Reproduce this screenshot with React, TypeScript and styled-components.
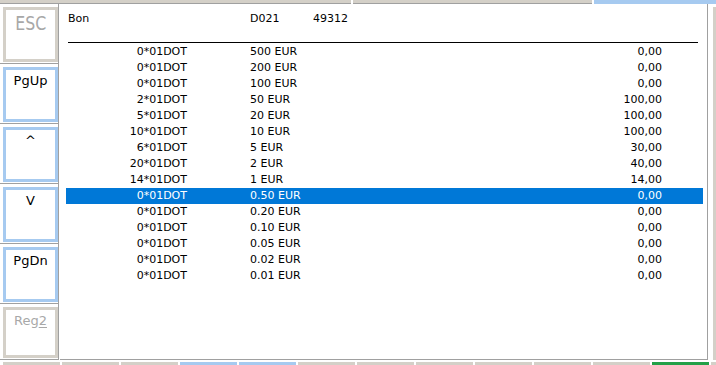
import React from 'react';
import styled, { createGlobalStyle } from 'styled-components';

const GlobalStyle = createGlobalStyle`
  html, body {
    margin: 0;
    padding: 0;
    background: #ffffff;
  }

  body {
    font-family: "DejaVu Sans", Verdana, sans-serif;
    color: #000000;
  }

  #root {
    width: 716px;
    height: 365px;
    overflow: hidden;
  }
`;

const colors = {
  face: '#d4d0c8',
  shadow: '#a0a0a0',
  pale: '#a6caf0',
  green: '#23a048',
  select: '#0078d7',
  disabled: '#a8a8a8',
};

type Tone = 'grey' | 'blue' | 'green';

const toneColor = (tone: Tone) =>
  tone === 'blue' ? colors.pale : tone === 'green' ? colors.green : colors.face;

const Screen = styled.div`
  display: flex;
  flex-direction: column;
  width: 716px;
  height: 365px;
  overflow: hidden;
  background: #ffffff;
`;

const TopStrip = styled.div`
  display: flex;
  gap: 2px;
  height: 4px;
  flex: none;
`;

const TopSeg = styled.div<{ $width?: number; $tone: Tone }>`
  box-sizing: border-box;
  flex: ${({ $width }) => ($width ? `0 0 ${$width}px` : '1')};
  height: 4px;
  background: ${({ $tone }) => toneColor($tone)};
  border-bottom: 1px solid ${({ $tone }) => ($tone === 'grey' ? colors.shadow : colors.pale)};
`;

const Middle = styled.div`
  display: flex;
  flex: 1;
  min-height: 0;
`;

const SideColumn = styled.div`
  display: flex;
  flex-direction: column;
  width: 59px;
  flex: none;
`;

const KeyCell = styled.div<{ $fill?: boolean }>`
  box-sizing: border-box;
  display: flex;
  height: ${({ $fill }) => ($fill ? 'auto' : '60px')};
  flex: ${({ $fill }) => ($fill ? '1' : 'none')};
  padding: 3px 0 1px 3px;
  border-right: 1px solid ${colors.shadow};
  border-bottom: 1px solid ${colors.shadow};
`;

const KeyBox = styled.div<{ $disabled?: boolean; $big?: boolean }>`
  box-sizing: border-box;
  width: 55px;
  flex: 1;
  border: 3px solid ${({ $disabled }) => ($disabled ? colors.face : colors.pale)};
  background: #ffffff;
  text-align: center;
  padding-top: ${({ $big }) => ($big ? '1px' : '3px')};
  font-size: ${({ $big }) => ($big ? '19px' : '13px')};
  line-height: ${({ $big }) => ($big ? '24px' : '16px')};
  color: ${({ $disabled }) => ($disabled ? colors.disabled : '#000000')};

  u {
    text-decoration: underline;
    text-underline-offset: 2px;
  }
`;

const NarrowLabel = styled.span`
  display: inline-block;
  transform: scaleX(0.83);
`;

const Panel = styled.div`
  box-sizing: border-box;
  flex: 1;
  margin-left: 1px;
  padding: 7px 4px 0 6px;
  border-right: 1px solid ${colors.shadow};
  border-bottom: 1px solid ${colors.shadow};
  font-size: 11px;
  line-height: 16px;
  overflow: hidden;
`;

const HeaderRow = styled.div`
  display: flex;
  height: 16px;
  white-space: nowrap;
`;

const HeaderCell = styled.div<{ $width?: number; $indent?: number }>`
  flex: ${({ $width }) => ($width ? `0 0 ${$width}px` : '1')};
  padding-left: ${({ $indent }) => $indent ?? 0}px;
  box-sizing: border-box;
`;

const Rule = styled.div`
  height: 1px;
  margin: 15px 5px 1px 2px;
  background: #000000;
`;

const Row = styled.div<{ $selected?: boolean }>`
  display: flex;
  height: 16px;
  white-space: nowrap;
  background: ${({ $selected }) => ($selected ? colors.select : 'transparent')};
  color: ${({ $selected }) => ($selected ? '#ffffff' : '#000000')};
`;

const Qty = styled.div`
  flex: 0 0 121px;
  text-align: right;
`;

const Denom = styled.div`
  flex: 1;
  margin-left: 63px;
`;

const Amount = styled.div`
  flex: 0 0 120px;
  margin-right: 41px;
  text-align: right;
`;

const RightGutter = styled.div`
  display: flex;
  width: 8px;
  flex: none;
  padding: 3px 0 0 5px;
  box-sizing: border-box;
`;

const GutterBar = styled.div`
  flex: 1;
  background: ${colors.face};
`;

const BottomStrip = styled.div`
  display: flex;
  gap: 2px;
  height: 3px;
  margin-top: 2px;
  padding-left: 3px;
  flex: none;
`;

const BottomSeg = styled.div<{ $tone: Tone }>`
  flex: 0 0 57px;
  background: ${({ $tone }) => toneColor($tone)};
`;

const rows = [
  ['0*01DOT', '500 EUR', '0,00'],
  ['0*01DOT', '200 EUR', '0,00'],
  ['0*01DOT', '100 EUR', '0,00'],
  ['2*01DOT', '50 EUR', '100,00'],
  ['5*01DOT', '20 EUR', '100,00'],
  ['10*01DOT', '10 EUR', '100,00'],
  ['6*01DOT', '5 EUR', '30,00'],
  ['20*01DOT', '2 EUR', '40,00'],
  ['14*01DOT', '1 EUR', '14,00'],
  ['0*01DOT', '0.50 EUR', '0,00'],
  ['0*01DOT', '0.20 EUR', '0,00'],
  ['0*01DOT', '0.10 EUR', '0,00'],
  ['0*01DOT', '0.05 EUR', '0,00'],
  ['0*01DOT', '0.02 EUR', '0,00'],
  ['0*01DOT', '0.01 EUR', '0,00'],
];

const bottomTones: Tone[] = [
  'grey', 'grey', 'grey', 'blue', 'blue', 'grey', 'grey',
  'grey', 'grey', 'grey', 'grey', 'green', 'grey',
];

const App: React.FC = () => {
  const selected = 9;

  return (
    <>
      <GlobalStyle />
      <Screen>
        <TopStrip>
          <TopSeg $width={351} $tone="grey" />
          <TopSeg $width={239} $tone="grey" />
          <TopSeg $tone="blue" />
        </TopStrip>

        <Middle>
          <SideColumn>
            <KeyCell>
              <KeyBox $disabled $big>
                <NarrowLabel>ESC</NarrowLabel>
              </KeyBox>
            </KeyCell>
            <KeyCell>
              <KeyBox>PgUp</KeyBox>
            </KeyCell>
            <KeyCell>
              <KeyBox>^</KeyBox>
            </KeyCell>
            <KeyCell>
              <KeyBox>V</KeyBox>
            </KeyCell>
            <KeyCell>
              <KeyBox>PgDn</KeyBox>
            </KeyCell>
            <KeyCell $fill>
              <KeyBox $disabled>
                Reg<u>2</u>
              </KeyBox>
            </KeyCell>
          </SideColumn>

          <Panel>
            <HeaderRow>
              <HeaderCell $width={184} $indent={2}>Bon</HeaderCell>
              <HeaderCell $width={63}>D021</HeaderCell>
              <HeaderCell>49312</HeaderCell>
            </HeaderRow>
            <Rule />
            {rows.map(([qty, denom, amount], i) => (
              <Row key={denom} $selected={i === selected}>
                <Qty>{qty}</Qty>
                <Denom>{denom}</Denom>
                <Amount>{amount}</Amount>
              </Row>
            ))}
          </Panel>

          <RightGutter>
            <GutterBar />
          </RightGutter>
        </Middle>

        <BottomStrip>
          {bottomTones.map((tone, i) => (
            <BottomSeg key={i} $tone={tone} />
          ))}
        </BottomStrip>
      </Screen>
    </>
  );
};

export default App;
